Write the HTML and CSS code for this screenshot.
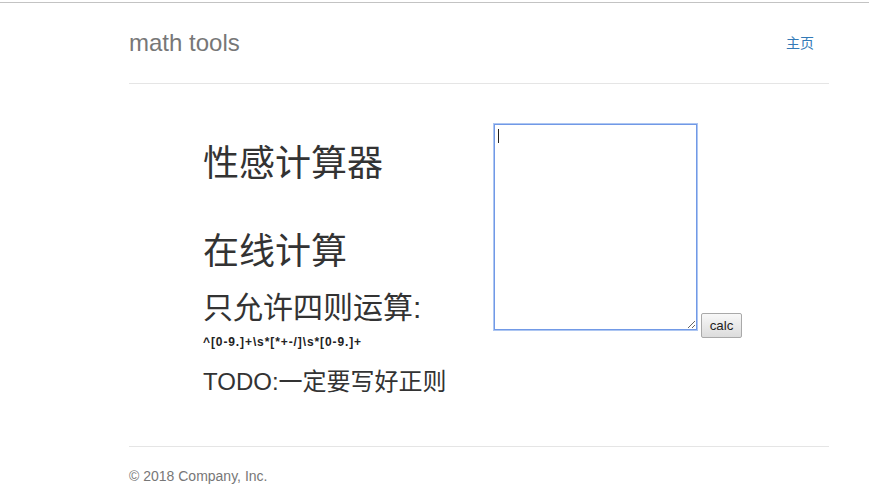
FILE: index.html
```html
<!DOCTYPE html>
<html lang="zh-CN">
<head>
<meta charset="utf-8">
<title>math tools</title>
<link rel="stylesheet" href="styles.css">
</head>
<body>
<div class="topline"></div>
<div class="container">
  <header class="header">
    <h3 class="brand">math tools</h3>
    <nav class="nav"><a href="#" class="nav-link">主页</a></nav>
  </header>
  <main class="main">
    <div class="intro">
      <h1 class="title title-first">性感计算器</h1>
      <h1 class="title title-second">在线计算</h1>
      <h2 class="subtitle">只允许四则运算:</h2>
      <div class="regex">^[0-9.]+\s*[*+-/]\s*[0-9.]+</div>
      <h3 class="todo">TODO:一定要写好正则</h3>
    </div>
    <form class="calc-form">
      <div class="expr-wrap">
        <textarea class="expr"></textarea>
        <span class="caret"></span>
      </div>
      <button type="button" class="calc-btn">calc</button>
    </form>
  </main>
  <footer class="footer">
    <p class="copyright">© 2018 Company, Inc.</p>
  </footer>
</div>
</body>
</html>
```

FILE: styles.css
```css
html, body {
  margin: 0;
  padding: 0;
  background: #fff;
}
body {
  font-family: "Liberation Sans", Arial, "Noto Sans CJK SC", sans-serif;
  font-size: 14px;
  line-height: 1.42857;
  color: #333;
}
.topline {
  margin-top: 2px;
  height: 1px;
  background: #c3c3c3;
}
.container {
  width: 700px;
  margin-left: 129px;
}
.header {
  display: flex;
  justify-content: space-between;
  align-items: center;
  padding-top: 20px;
  padding-bottom: 20px;
  border-bottom: 1px solid #e5e5e5;
}
.brand {
  margin: 0;
  font-size: 24px;
  line-height: 40px;
  font-weight: normal;
  color: #777;
}
.nav-link {
  display: block;
  padding: 10px 15px;
  line-height: 20px;
  font-size: 14px;
  color: #337ab7;
  text-decoration: none;
}
.main {
  display: flex;
  padding-left: 74px;
  height: 362px;
}
.intro {
  width: 291px;
  display: flex;
  flex-direction: column;
}
.title {
  margin: 0;
  font-size: 36px;
  line-height: 39.6px;
  font-weight: normal;
  color: #333;
}
.title-first { margin-top: 60px; }
.title-second { margin-top: 48px; }
.subtitle {
  margin: 20px 0 0;
  font-size: 30px;
  line-height: 33px;
  font-weight: normal;
  color: #333;
}
.regex {
  margin-top: 10px;
  font-size: 12px;
  line-height: 17px;
  font-weight: bold;
  letter-spacing: 0.9px;
  color: #222;
  white-space: nowrap;
}
.todo {
  margin: 18px 0 0;
  font-size: 24px;
  line-height: 26.4px;
  font-weight: normal;
  color: #333;
  white-space: nowrap;
}
.calc-form {
  display: flex;
  align-items: flex-start;
  gap: 4px;
  margin: 0;
  padding-top: 40px;
}
.expr-wrap {
  position: relative;
  width: 203px;
  height: 206px;
}
.expr {
  display: block;
  box-sizing: border-box;
  width: 203px;
  height: 206px;
  margin: 0;
  padding: 3px;
  border: 1px solid #7199e6;
  box-shadow: 0 0 0 1px #adc6f2;
  outline: none;
  font-family: "Liberation Mono", monospace;
  font-size: 13px;
  resize: both;
}
.caret {
  position: absolute;
  left: 4px;
  top: 5px;
  width: 1px;
  height: 14px;
  background: #222;
}
.calc-btn {
  box-sizing: border-box;
  margin-top: 189px;
  width: 41px;
  height: 25px;
  padding: 0;
  border: 1px solid #a9a9a9;
  border-radius: 2px;
  background: linear-gradient(#f8f8f8, #dcdcdc);
  font-family: "Liberation Sans", Arial, sans-serif;
  font-size: 13.33px;
  color: #222;
}
.footer {
  border-top: 1px solid #e5e5e5;
  padding-top: 19px;
}
.copyright {
  margin: 0;
  font-size: 14px;
  line-height: 20px;
  color: #777;
}
```
